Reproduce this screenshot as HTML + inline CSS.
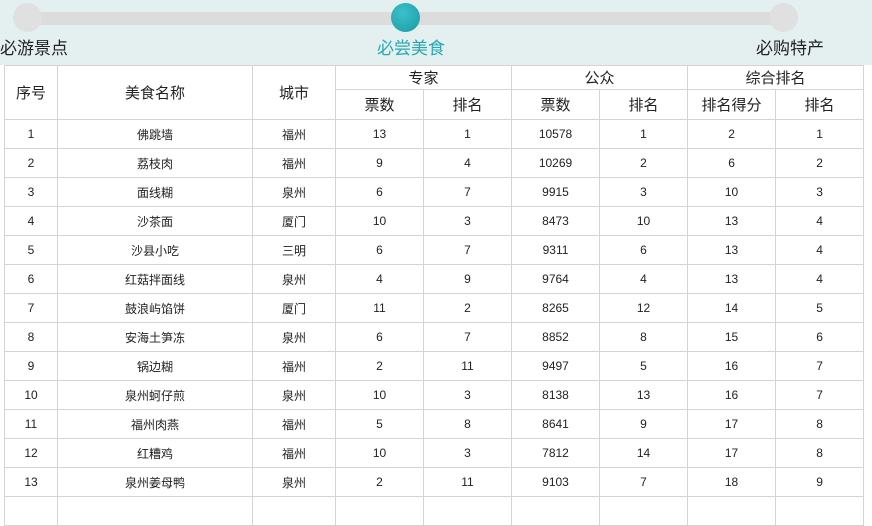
<!DOCTYPE html>
<html><head><meta charset="utf-8"><style>
*{margin:0;padding:0;box-sizing:border-box}
body{width:872px;height:501px;overflow:hidden;background:#fff;font-family:"Liberation Sans","Noto Sans CJK SC",sans-serif;position:relative}
.top{position:absolute;left:0;top:0;width:872px;height:65px;background:#e4f0f0}
.bar{position:absolute;left:28px;top:12px;width:756px;height:13px;background:#dcdcdc;border-radius:6px}
.dot{position:absolute;top:3px;width:29px;height:29px;border-radius:50%;background:#e0e0e0}
.lbl{position:absolute;top:34px;font-size:17px;color:#222}
table{position:absolute;left:4px;top:65px;border-collapse:collapse;table-layout:fixed;width:860px}
td,th{border:1px solid #d4d4d4;text-align:center;font-weight:normal;color:#222}
th{font-size:15px}
td{font-size:12px;height:29px}
</style></head><body>
<div class="top">
<div class="bar"></div>
<div class="dot" style="left:13px"></div>
<div class="dot" style="left:391px;background:radial-gradient(circle at 40% 35%,#3cc0c8,#1a9aa6)"></div>
<div class="dot" style="left:769px"></div>
<div class="lbl" style="left:0">必游景点</div>
<div class="lbl" style="left:377px;color:#2aa8b2">必尝美食</div>
<div class="lbl" style="left:756px">必购特产</div>
</div>
<table>
<colgroup><col style="width:53px"><col style="width:195px"><col style="width:83px"><col style="width:88px"><col style="width:88px"><col style="width:88px"><col style="width:88px"><col style="width:88px"><col style="width:88px"></colgroup>
<tr style="height:24px"><th rowspan="2">序号</th><th rowspan="2">美食名称</th><th rowspan="2">城市</th><th colspan="2">专家</th><th colspan="2">公众</th><th colspan="2">综合排名</th></tr>
<tr style="height:30px"><th>票数</th><th>排名</th><th>票数</th><th>排名</th><th>排名得分</th><th>排名</th></tr>
<tr><td>1</td><td>佛跳墙</td><td>福州</td><td>13</td><td>1</td><td>10578</td><td>1</td><td>2</td><td>1</td></tr>
<tr><td>2</td><td>荔枝肉</td><td>福州</td><td>9</td><td>4</td><td>10269</td><td>2</td><td>6</td><td>2</td></tr>
<tr><td>3</td><td>面线糊</td><td>泉州</td><td>6</td><td>7</td><td>9915</td><td>3</td><td>10</td><td>3</td></tr>
<tr><td>4</td><td>沙茶面</td><td>厦门</td><td>10</td><td>3</td><td>8473</td><td>10</td><td>13</td><td>4</td></tr>
<tr><td>5</td><td>沙县小吃</td><td>三明</td><td>6</td><td>7</td><td>9311</td><td>6</td><td>13</td><td>4</td></tr>
<tr><td>6</td><td>红菇拌面线</td><td>泉州</td><td>4</td><td>9</td><td>9764</td><td>4</td><td>13</td><td>4</td></tr>
<tr><td>7</td><td>鼓浪屿馅饼</td><td>厦门</td><td>11</td><td>2</td><td>8265</td><td>12</td><td>14</td><td>5</td></tr>
<tr><td>8</td><td>安海土笋冻</td><td>泉州</td><td>6</td><td>7</td><td>8852</td><td>8</td><td>15</td><td>6</td></tr>
<tr><td>9</td><td>锅边糊</td><td>福州</td><td>2</td><td>11</td><td>9497</td><td>5</td><td>16</td><td>7</td></tr>
<tr><td>10</td><td>泉州蚵仔煎</td><td>泉州</td><td>10</td><td>3</td><td>8138</td><td>13</td><td>16</td><td>7</td></tr>
<tr><td>11</td><td>福州肉燕</td><td>福州</td><td>5</td><td>8</td><td>8641</td><td>9</td><td>17</td><td>8</td></tr>
<tr><td>12</td><td>红糟鸡</td><td>福州</td><td>10</td><td>3</td><td>7812</td><td>14</td><td>17</td><td>8</td></tr>
<tr><td>13</td><td>泉州姜母鸭</td><td>泉州</td><td>2</td><td>11</td><td>9103</td><td>7</td><td>18</td><td>9</td></tr>
<tr><td>&nbsp;</td><td></td><td></td><td></td><td></td><td></td><td></td><td></td><td></td></tr>
</table>
</body></html>
